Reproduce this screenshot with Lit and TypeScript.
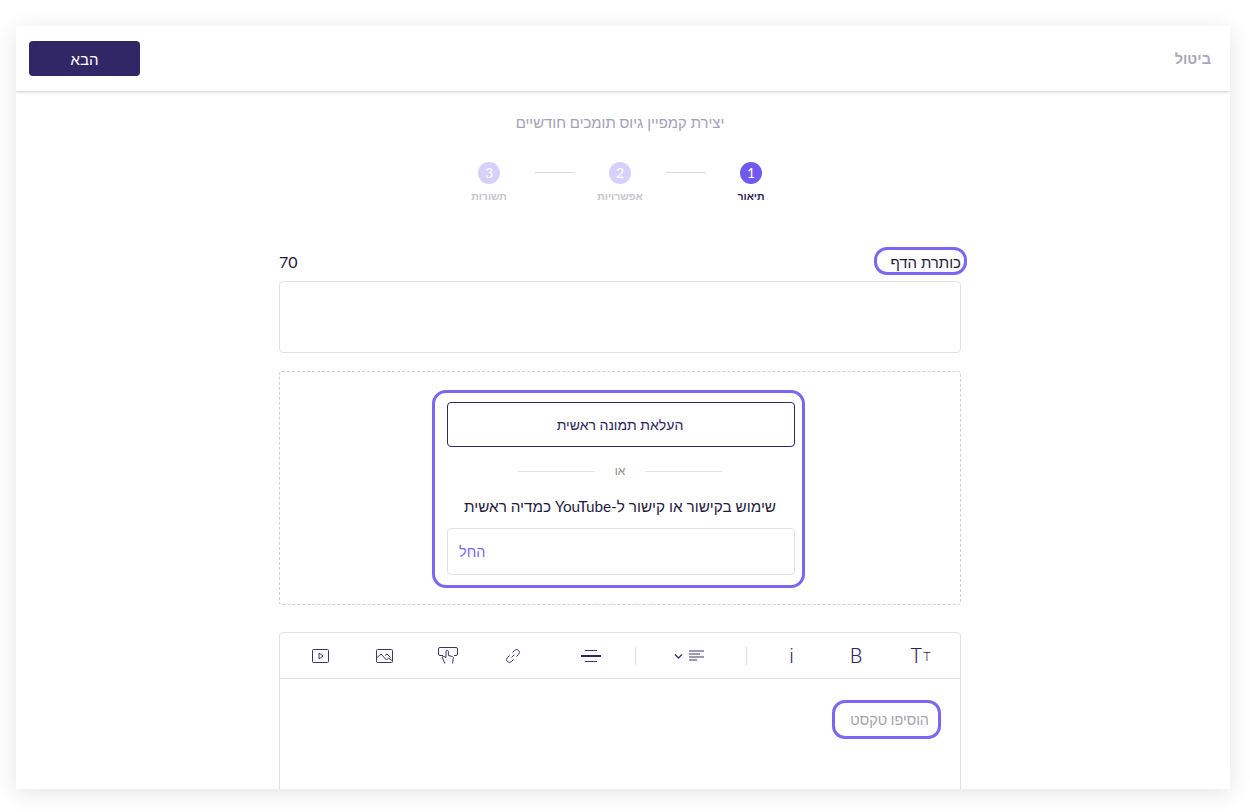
import { LitElement, html, css } from 'lit';
import { customElement } from 'lit/decorators.js';

const FONT = css`Lato, "Liberation Sans", sans-serif`;

@customElement('app-root')
export class AppRoot extends LitElement {
  static styles = css`
    :host {
      display: block;
      height: 812px;
      overflow: hidden;
      background: #fff;
      font-family: ${FONT};
      color: #2c2560;
    }
    .sheet {
      margin: 26px 20px 0 16px;
      height: 763px;
      background: #fff;
      box-shadow: 0 4px 22px rgba(0, 0, 0, 0.11);
      overflow: hidden;
      display: flex;
      flex-direction: column;
    }
    .topbar {
      height: 65px;
      flex: none;
      box-sizing: border-box;
      display: flex;
      align-items: center;
      justify-content: space-between;
      padding: 0 19px 0 13px;
      box-shadow: 0 1px 3px rgba(0, 0, 0, 0.2);
      position: relative;
    }
    .cancel {
      font-size: 14.5px;
      font-weight: 700;
      color: #a9a7ba;
    }
    .next {
      width: 111px;
      height: 35px;
      background: #322766;
      color: #fff;
      border-radius: 4px;
      display: flex;
      align-items: center;
      justify-content: center;
      font-size: 15px;
    }
    .body {
      flex: 1;
      padding-right: 6px;
      display: flex;
      flex-direction: column;
      align-items: center;
      min-height: 0;
    }
    .page-title {
      margin-top: 22px;
      font-size: 14.9px;
      line-height: 19px;
      color: #a3a1b5;
    }
    .stepper {
      margin-top: 30px;
      display: flex;
      align-items: flex-start;
    }
    .step {
      width: 91px;
      display: flex;
      flex-direction: column;
      align-items: center;
      gap: 5px;
      font-size: 10.5px;
      line-height: 14px;
      font-weight: 700;
      color: #c6c5cf;
    }
    .step.on {
      color: #2c2560;
    }
    .num {
      width: 22px;
      height: 22px;
      border-radius: 50%;
      background: #d7d0fb;
      color: #fff;
      font-size: 14px;
      line-height: 22px;
      text-align: center;
      font-weight: 400;
    }
    .step.on .num {
      background: #7059ee;
    }
    .connector {
      width: 40px;
      height: 1px;
      margin-top: 10px;
      background: #d9d9dd;
    }
    .form {
      width: 682px;
      margin-top: 44px;
    }
    .label-row {
      height: 28px;
      box-sizing: border-box;
      padding-top: 2px;
      display: flex;
      align-items: center;
      justify-content: space-between;
      font-size: 15px;
      line-height: 20px;
    }
    .count {
      color: #1f1b3d;
      font-size: 16px;
    }
    .mark {
      position: relative;
      display: block;
      color: #1f1b3d;
    }
    .mark::after {
      content: '';
      position: absolute;
      inset: -5px -6px -3px -16px;
      border: 3px solid #7b66f6;
      border-radius: 13px;
    }
    .title-input {
      height: 72px;
      margin-top: 6px;
      box-sizing: border-box;
      border: 1px solid #e2e2e6;
      border-radius: 4px;
    }
    .media {
      margin-top: 18px;
      height: 234px;
      box-sizing: border-box;
      border: 1px dashed #cfcfd4;
      border-radius: 3px;
      display: flex;
      justify-content: center;
      align-items: flex-start;
      padding-top: 18px;
    }
    .media-box {
      width: 373px;
      height: 198px;
      box-sizing: border-box;
      margin-left: -3px;
      border: 3px solid #7b66f6;
      border-radius: 14px;
      padding: 9px 7px 0 12px;
      display: flex;
      flex-direction: column;
      align-items: stretch;
    }
    .upload {
      height: 45px;
      box-sizing: border-box;
      border: 1px solid #322766;
      border-radius: 4px;
      padding-right: 2px;
      display: flex;
      align-items: center;
      justify-content: center;
      font-size: 14px;
      color: #2c2560;
    }
    .or {
      margin-top: 17px;
      padding-right: 2px;
      display: flex;
      align-items: center;
      justify-content: center;
      gap: 20px;
      font-size: 12px;
      line-height: 14px;
      color: #8e8e96;
    }
    .or i {
      display: block;
      width: 77px;
      height: 1px;
      background: #e2e2e6;
    }
    .link-hint {
      margin-top: 18px;
      padding-right: 2px;
      text-align: center;
      font-size: 15.3px;
      line-height: 20px;
      color: #1f1b3d;
    }
    .link-input {
      margin-top: 12px;
      height: 47px;
      box-sizing: border-box;
      border: 1px solid #e2e2e6;
      border-radius: 4px;
      display: flex;
      align-items: center;
      justify-content: flex-end;
      padding-left: 11px;
      color: #7b66f6;
      font-size: 14.5px;
    }
    .editor {
      margin-top: 27px;
      border: 1px solid #e2e2e6;
      border-radius: 4px 4px 0 0;
      height: 300px;
    }
    .toolbar {
      height: 46px;
      box-sizing: border-box;
      border-bottom: 1px solid #e2e2e6;
      display: flex;
      align-items: center;
      padding-right: 7px;
      color: #2c2560;
    }
    .tool {
      flex: none;
      display: flex;
      align-items: center;
      justify-content: center;
      font-family: Roboto, sans-serif;
      font-weight: 300;
      font-size: 20px;
      line-height: 24px;
      width: 65px;
    }
    .tool.w64 { width: 64px; }
    .tool.w110 { width: 110px; }
    .tool.w88 { width: 88px; }
    .tool.w68 { width: 68px; }
    .tool.w63 { width: 63px; }
    .tool.w12 { width: 12px; }
    .tool small {
      font-size: 13px;
      margin: 3px 0 0 1px;
    }
    .tool svg {
      display: block;
      fill: none;
      stroke: #3b3568;
      stroke-width: 1;
    }
    .tool svg.align {
      margin-right: 4px;
    }
    .sep {
      flex: none;
      width: 1px;
      height: 18px;
      background: #dfdfe3;
    }
    .editor-text {
      display: flex;
      justify-content: flex-start;
      padding: 31px 31px 0 0;
    }
    .placeholder {
      position: relative;
      font-size: 14.4px;
      line-height: 20px;
      color: #a3a3ab;
    }
    .placeholder::after {
      content: '';
      position: absolute;
      inset: -10px -12px -9px -18px;
      border: 3px solid #7b66f6;
      border-radius: 13px;
    }
  `;

  render() {
    return html`
      <div class="sheet" dir="rtl">
        <div class="topbar">
          <span class="cancel">ביטול</span>
          <span class="next">הבא</span>
        </div>
        <div class="body">
          <div class="page-title">יצירת קמפיין גיוס תומכים חודשיים</div>
          <div class="stepper">
            <div class="step on"><span class="num">1</span>תיאור</div>
            <div class="connector"></div>
            <div class="step"><span class="num">2</span>אפשרויות</div>
            <div class="connector"></div>
            <div class="step"><span class="num">3</span>תשורות</div>
          </div>
          <div class="form">
            <div class="label-row">
              <span class="mark">כותרת הדף</span>
              <span class="count">70</span>
            </div>
            <div class="title-input"></div>
            <div class="media">
              <div class="media-box">
                <div class="upload">העלאת תמונה ראשית</div>
                <div class="or"><i></i>או<i></i></div>
                <div class="link-hint">שימוש בקישור או קישור ל-YouTube כמדיה ראשית</div>
                <div class="link-input">החל</div>
              </div>
            </div>
            <div class="editor">
              <div class="toolbar">
                <span class="tool" dir="ltr">T<small>T</small></span>
                <span class="tool w64">B</span>
                <span class="tool">i</span>
                <span class="tool w12"></span>
                <span class="sep"></span>
                <span class="tool w110">
                  <svg class="align" width="31" height="12" viewBox="0 0 31 12">
                    <path d="M15 1h15M15 4h11M15 7h15M15 10h8" />
                    <path d="M1 4.500 4.500 8 8 4.500" stroke-width="1.400" />
                  </svg>
                </span>
                <span class="sep"></span>
                <span class="tool w88">
                  <svg width="20" height="12" viewBox="0 0 20 12">
                    <path d="M4 .5h12M4 11.500h12" />
                    <path d="M0 6h20" stroke-width="2" stroke="#2c2560" />
                  </svg>
                </span>
                <span class="tool w68">
                  <svg width="16" height="16" viewBox="0 0 16 16">
                    <path d="M6.600 9.400 9.400 6.600" />
                    <path d="M7.500 4.500 9.600 2.400a2.800 2.800 0 0 1 4 4L11.500 8.500" />
                    <path d="M8.500 11.500 6.400 13.600a2.800 2.800 0 0 1-4-4L4.500 7.500" />
                  </svg>
                </span>
                <span class="tool w63">
                  <svg width="20" height="17" viewBox="0 0 20 17">
                    <path d="M5 8.500H2A1.500 1.500 0 0 1 .5 7V2A1.500 1.500 0 0 1 2 .5h16A1.500 1.500 0 0 1 19.500 2v5A1.500 1.500 0 0 1 18 8.500h-2" />
                    <path d="M8 10.500V4.500a1.200 1.200 0 0 1 2.400 0v4l4 1 1 1-.8 6" />
                    <path d="M8 10.500 6 9.500c-1.200-.5-2 .5-1.500 1.400l2.300 5.600" />
                  </svg>
                </span>
                <span class="tool w63">
                  <svg width="17" height="14" viewBox="0 0 17 14">
                    <rect x="0.500" y="0.500" width="16" height="13" rx="1" />
                    <path d="M0.500 9 5 5l5.500 6 2-2 4 3M9 6.500l2-1.500 3.500 3.500" />
                  </svg>
                </span>
                <span class="tool">
                  <svg width="17" height="14" viewBox="0 0 17 14">
                    <rect x="0.500" y="0.500" width="16" height="13" rx="1" />
                    <path d="M7 4v6l4-3z" />
                  </svg>
                </span>
              </div>
              <div class="editor-text">
                <span class="placeholder">הוסיפו טקסט</span>
              </div>
            </div>
          </div>
        </div>
      </div>
    `;
  }
}
